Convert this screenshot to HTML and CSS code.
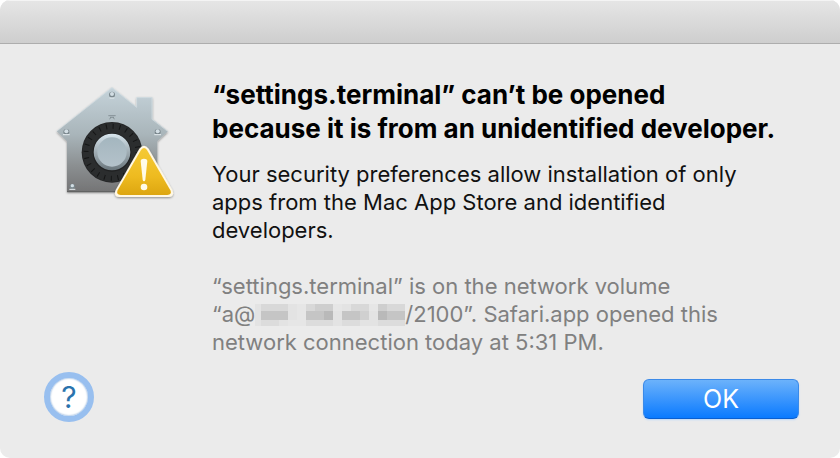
FILE: index.html
```
<!DOCTYPE html>
<html lang="en">
<head>
    <meta charset="UTF-8">
    <meta name="viewport" content="width=device-width, initial-scale=1.0">
    <title>Unidentified developer</title>
    <link rel="stylesheet" href="styles.css">
</head>
<body>
    <div class="dialog" role="alertdialog" aria-labelledby="title" aria-describedby="message">
        <header class="titlebar"></header>
        <main class="content">
            <svg class="icon" viewBox="0 0 420 405" aria-hidden="true">
                <defs>
                    <linearGradient id="house" x1="0" y1="0" x2="0" y2="1">
                        <stop offset="0" stop-color="#c5d3da"/>
                        <stop offset=".45" stop-color="#a9b5ba"/>
                        <stop offset=".75" stop-color="#8b8f91"/>
                        <stop offset="1" stop-color="#747475"/>
                    </linearGradient>
                    <linearGradient id="knob" x1="0" y1="0" x2="0" y2="1">
                        <stop offset="0" stop-color="#d8e6ee"/>
                        <stop offset="1" stop-color="#69757b"/>
                    </linearGradient>
                    <linearGradient id="face" x1="0" y1="0" x2="0" y2="1">
                        <stop offset="0" stop-color="#a4b6bf"/>
                        <stop offset="1" stop-color="#b4c2ca"/>
                    </linearGradient>
                    <linearGradient id="warn" x1="0" y1="0" x2="0" y2="1">
                        <stop offset="0" stop-color="#f5ca36"/>
                        <stop offset=".6" stop-color="#eebb20"/>
                        <stop offset="1" stop-color="#dda610"/>
                    </linearGradient>
                    <filter id="shadow" x="-10%" y="-10%" width="120%" height="125%">
                        <feDropShadow dx="0" dy="3" stdDeviation="3" flood-opacity=".4"/>
                    </filter>
                </defs>
                <path d="M201 37 275 96V67H322V132L369 169 337 199V351H66V199L35 169Z" fill="url(#house)" filter="url(#shadow)"/>
                <path d="M36 168 201 38 275 97V68H321V133L368 169" fill="none" stroke="#d7e1e6" stroke-width="2"/>
                <path d="M66 350H230" stroke="#5f6061" stroke-width="3"/>
                <path d="M190 122H212M195 127H207M193 132 198 128M209 132 204 128" stroke="#6d787d" stroke-width="2"/>
                <g fill="#7b888e">
                    <circle cx="201" cy="59" r="9"/>
                    <circle cx="64" cy="171" r="9"/>
                    <circle cx="338" cy="171" r="9"/>
                    <circle cx="82" cy="334" r="8"/>
                </g>
                <g fill="#d3dee4">
                    <circle cx="201" cy="57" r="6"/>
                    <circle cx="64" cy="169" r="6"/>
                    <circle cx="338" cy="169" r="6"/>
                    <circle cx="82" cy="332" r="5"/>
                </g>
                <g stroke="#e8eff2" stroke-width="3">
                    <path d="M194 69H208M54 179H74M328 179H348M73 343H91"/>
                </g>
                <circle cx="201" cy="232" r="91" fill="#252627"/>
                <circle cx="201" cy="232" r="88" fill="#2b2d2e"/>
                <circle cx="201" cy="232" r="78" fill="none" stroke="#151616" stroke-width="15" stroke-dasharray="3 17.4"/>
                <circle cx="201" cy="232" r="58" fill="#202122"/>
                <circle cx="201" cy="231" r="55" fill="url(#knob)"/>
                <circle cx="201" cy="231" r="44" fill="url(#face)"/>
                <path d="M283 221Q297 203 311 221L382 345Q390 365 370 366H224Q204 365 212 345Z" fill="#fff8e5" filter="url(#shadow)"/>
                <path d="M288 225Q297 213 306 225L376 346Q382 359 367 360H227Q212 359 218 346Z" fill="url(#warn)"/>
                <path d="M287 258Q288 251 297 251Q306 251 307 258L301 314Q300 319 297 319Q294 319 293 314Z" fill="#fffbe8"/>
                <circle cx="297" cy="336" r="10" fill="#fffbe8"/>
            </svg>
            <div class="text">
                <h1 id="title">“settings.terminal” can’t be opened<br>
                    because it is from an unidentified developer.</h1>
                <p id="message">Your security preferences allow installation of only<br>
                    apps from the Mac App Store and identified<br>
                    developers.</p>
                <p class="details">“settings.terminal” is on the network volume<br>
                    “a@<svg class="redacted" viewBox="0 0 150 22" shape-rendering="crispEdges" role="img" aria-label="hidden address">
                        <path fill="#e3e3e3" d="M0 0H150V22H0Z"/>
                        <path fill="#d8d8d8" d="M6 0H33V7H6ZM51 0H78V7H51ZM96 0H114V7H96ZM132 0H150V7H132Z"/>
                        <path fill="#cecece" d="M60 0H78V7H60ZM123 0H132V7H123Z"/>
                        <path fill="#c5c5c5" d="M6 7H33V16H6ZM51 7H69V16H51ZM87 7H105V16H87ZM132 7H150V16H132Z"/>
                        <path fill="#d0d0d0" d="M105 7H114V16H105Z"/>
                        <path fill="#b9b9b9" d="M69 7H78V16H69ZM123 7H132V16H123Z"/>
                        <path fill="#dcdcdc" d="M6 16H24V22H6ZM51 16H78V22H51ZM87 16H105V22H87ZM123 16H150V22H123Z"/>
                        <path fill="#e6e6e6" d="M42 0H51V22H42ZM78 0H87V7H78ZM33 16H42V22H33ZM114 0H123V7H114Z"/>
                    </svg>/2100”. Safari.app opened this<br>
                    network connection today at 5:31 PM.</p>
            </div>
        </main>
        <footer class="actions">
            <button class="help" type="button" aria-label="Help">?</button>
            <button class="ok" type="button">OK</button>
        </footer>
    </div>
</body>
</html>
```
FILE: styles.css
```
* {
    box-sizing: border-box;
}
body {
    margin: 0;
    background: #fff;
    font-family: Inter, "Liberation Sans", sans-serif;
}
.dialog {
    display: flex;
    flex-direction: column;
    min-height: 100vh;
    background: #ebebeb;
    border-radius: 10px;
    overflow: hidden;
}
.titlebar {
    height: 44px;
    background: linear-gradient(#e6e6e6, #cecece);
    border-bottom: 1px solid #adadad;
    box-shadow: inset 0 1px #f4f4f4;
}
.content {
    display: flex;
    align-items: flex-start;
    gap: 27px;
    padding: 34px 40px 0 45px;
}
.icon {
    flex: none;
    width: 140px;
    height: 135px;
    margin-top: -3px;
}
.text {
    flex: 1;
}
h1 {
    margin: 0 0 14px;
    font-size: 26px;
    line-height: 34px;
    font-weight: 700;
    color: #000;
}
p {
    margin: 0 0 28px;
    font-size: 22px;
    line-height: 28px;
    color: #111;
}
p.details {
    margin: 0;
    color: #808080;
}
.redacted {
    width: 150px;
    height: 22px;
    vertical-align: -4px;
}
.actions {
    display: flex;
    justify-content: space-between;
    align-items: flex-end;
    margin-top: auto;
    padding: 0 41px 36px 44px;
}
button {
    padding: 0;
    font-family: inherit;
}
.help {
    width: 50px;
    height: 50px;
    border: 6px solid #98bfef;
    border-radius: 50%;
    background: #fff;
    box-shadow: inset 0 0 2px #5d8fc8;
    font-size: 30px;
    line-height: 38px;
    color: #2a73ad;
}
.ok {
    width: 156px;
    height: 40px;
    margin-bottom: 3px;
    border: 1px solid #3b8ae8;
    border-bottom-color: #0a5fd0;
    border-radius: 6px;
    background: linear-gradient(#6cb2fb, #0a7aff);
    box-shadow: 0 1px 2px #bcd8fa;
    font-size: 25px;
    line-height: 38px;
    color: #fff;
}
```
